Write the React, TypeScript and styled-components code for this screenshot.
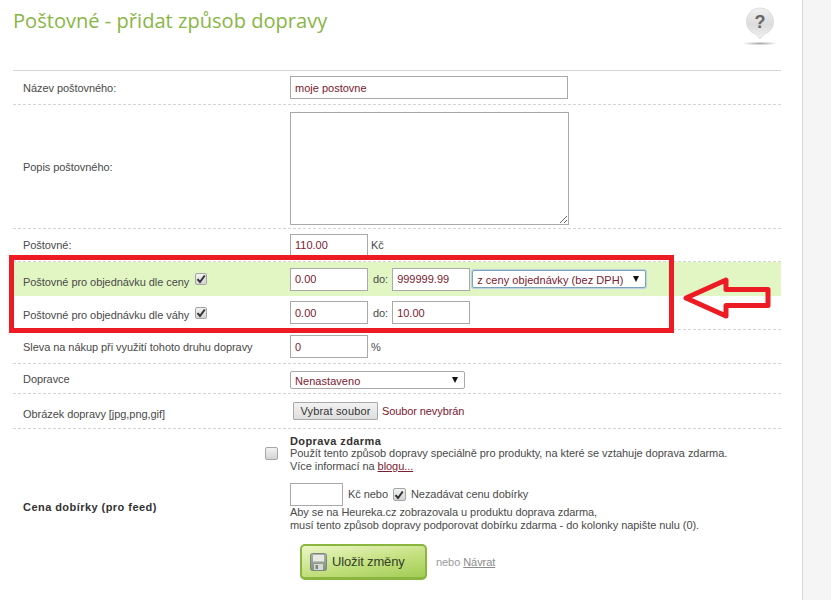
import React from "react";
import styled, { createGlobalStyle } from "styled-components";

const GlobalStyle = createGlobalStyle`
  html, body {
    margin: 0;
    padding: 0;
    background: #f5f5f5;
    height: 600px;
    overflow: hidden;
  }
`;

const Page = styled.div`
  position: relative;
  width: 803px;
  height: 600px;
  box-sizing: border-box;
  background: #fff;
  border-right: 1px solid #d8d8d8;
  padding: 0 21px 0 13px;
  font-family: "Liberation Sans", Arial, sans-serif;
  font-size: 11px;
  letter-spacing: -0.06px;
  color: #4a4a4a;
  overflow: hidden;
`;

const Header = styled.div`
  display: flex;
  justify-content: space-between;
  height: 71px;
  box-sizing: border-box;
  border-bottom: 1px solid #d6d6d6;
`;

const Title = styled.h1`
  margin: 9px 0 0;
  font-family: "Open Sans", sans-serif;
  font-weight: 400;
  font-size: 20.1px;
  line-height: 24px;
  letter-spacing: 0;
  color: #88b645;
`;

const HelpIcon = styled.svg`
  width: 38px;
  height: 40px;
  margin: 7px 2px 0 0;
`;

const Row = styled.div<{ $height: number; $green?: boolean; $last?: boolean }>`
  display: flex;
  align-items: center;
  height: ${(p) => p.$height}px;
  box-sizing: border-box;
  background: ${(p) => (p.$green ? "#e2f6c4" : "transparent")};
  border-bottom: ${(p) => (p.$last ? "none" : "1px dashed #d4d4d4")};
`;

const Label = styled.div<{ $width?: number; $bold?: boolean; $drop?: number }>`
  width: ${(p) => p.$width ?? 277}px;
  flex: none;
  box-sizing: border-box;
  padding: ${(p) => p.$drop ?? 0}px 0 0 10px;
  font-weight: ${(p) => (p.$bold ? 700 : 400)};
  letter-spacing: ${(p) => (p.$bold ? "0.45px" : "inherit")};
  color: ${(p) => (p.$bold ? "#333" : "#4a4a4a")};
  display: flex;
  align-items: center;
  gap: 6px;
`;

const Value = styled.div`
  display: flex;
  align-items: center;
`;

const Field = styled.input<{ $width: number }>`
  width: ${(p) => p.$width}px;
  height: 23px;
  box-sizing: border-box;
  border: 1px solid #a9a9a9;
  padding: 0 4px;
  margin: 0;
  background: #fff;
  font-family: "Liberation Sans", Arial, sans-serif;
  font-size: 11px;
  color: #7b2032;
  outline: none;
`;

const Area = styled.textarea`
  display: block;
  width: 279px;
  height: 113px;
  box-sizing: border-box;
  border: 1px solid #a9a9a9;
  margin: 3px 0 0;
  padding: 4px;
  outline: none;
`;

const Unit = styled.span<{ $left?: number; $right?: number }>`
  margin-left: ${(p) => p.$left ?? 3}px;
  margin-right: ${(p) => p.$right ?? 0}px;
`;

const SelectBox = styled.div<{ $width: number; $focused?: boolean }>`
  position: relative;
  width: ${(p) => p.$width}px;
  height: 18px;
  margin-top: ${(p) => (p.$focused ? 0 : 2)}px;
  box-sizing: border-box;
  border: 1px solid ${(p) => (p.$focused ? "#7da2c0" : "#a9a9a9")};
  box-shadow: ${(p) => (p.$focused ? "0 0 1px 1px #b8d0e4" : "none")};
  border-radius: 2px;
  background: #fff;
  padding-left: 4px;
  line-height: 18px;
  font-size: 11px;
  letter-spacing: 0.05px;
  color: #7b2032;
`;

const SelectArrow = styled.span`
  position: absolute;
  top: 5px;
  right: 6px;
  width: 0;
  height: 0;
  border-left: 3.5px solid transparent;
  border-right: 3.5px solid transparent;
  border-top: 6px solid #111;
`;

const Tick = styled.span<{ $size?: number }>`
  display: inline-flex;
  flex: none;
  align-items: center;
  justify-content: center;
  width: ${(p) => p.$size ?? 12}px;
  height: ${(p) => p.$size ?? 12}px;
  box-sizing: border-box;
  border: 1px solid #a5a5a5;
  border-radius: 2px;
  background: linear-gradient(#f2f2f2, #d4d4d4);
`;

const RaisedTick = styled(Tick)`
  margin-top: -5px;
`;

const FileButton = styled.button`
  height: 18px;
  width: 85px;
  margin: 0 0 0 3px;
  padding: 0;
  box-sizing: border-box;
  border: 1px solid #a8a8a8;
  border-radius: 1px;
  background: linear-gradient(#f2f2f2, #dedede);
  font-family: "Liberation Sans", Arial, sans-serif;
  font-size: 11px;
  letter-spacing: 0.15px;
  color: #333;
`;

const Wine = styled.span`
  color: #7b2032;
  margin-left: 4px;
  letter-spacing: -0.1px;
`;

const TickCell = styled.div`
  width: 27px;
  flex: none;
  align-self: flex-start;
  margin-top: 18px;
  padding-left: 2px;
  box-sizing: border-box;
`;

const FreeColumn = styled.div`
  display: flex;
  flex-direction: column;
  align-self: flex-start;
  margin-top: 6px;
  line-height: 13px;
`;

const FreeTitle = styled.div`
  font-weight: 700;
  letter-spacing: 0.4px;
  color: #333;
  margin-bottom: -1px;
`;

const BlogLink = styled.a`
  color: #7b2032;
  text-decoration: underline;
`;

const CodRow = styled.div`
  display: flex;
  align-items: center;
  margin: 10px 0 0;
  gap: 5px;
`;

const ButtonRow = styled.div`
  display: flex;
  align-items: center;
  margin: 12px 0 0 10px;
  gap: 9px;
`;

const SaveButton = styled.button`
  display: flex;
  align-items: center;
  gap: 5px;
  width: 127px;
  height: 36px;
  box-sizing: border-box;
  padding: 0 0 0 8px;
  border: 2px solid #8ab53e;
  border-bottom-width: 3px;
  border-radius: 5px;
  background: linear-gradient(170deg, #ecf6c6, #c3e07e 55%, #a2cc55);
  font-family: "Liberation Sans", Arial, sans-serif;
  font-size: 13px;
  letter-spacing: -0.15px;
  color: #33402a;
`;

const Muted = styled.span`
  color: #9a9a9a;
`;

const MutedLink = styled.a`
  color: #8c8c8c;
  text-decoration: underline;
`;

const RedFrame = styled.div`
  position: absolute;
  left: 9px;
  top: 255px;
  width: 665px;
  height: 78px;
  box-sizing: border-box;
  border: 5px solid #ed1c24;
  pointer-events: none;
`;

const Arrow = styled.svg`
  position: absolute;
  left: 680px;
  top: 275px;
  width: 94px;
  height: 46px;
`;

const Check = () => (
  <svg width="10" height="10" viewBox="0 0 10 10">
    <path d="M1.5 5.2 L4 8 L8.8 1.5" fill="none" stroke="#333" strokeWidth="2" />
  </svg>
);

const Floppy = () => (
  <svg width="17" height="18" viewBox="0 0 17 18">
    <defs>
      <linearGradient id="floppyBody" x1="0" y1="0" x2="0" y2="1">
        <stop offset="0" stopColor="#a9b2a6" />
        <stop offset="1" stopColor="#858f84" />
      </linearGradient>
    </defs>
    <rect x="0.5" y="0.5" width="16" height="17" rx="2" fill="url(#floppyBody)" stroke="#7d867e" />
    <rect x="3" y="2" width="11" height="6.5" fill="#e6eae2" />
    <rect x="4" y="11" width="9" height="6" fill="#d6dbd2" />
    <rect x="5.5" y="12" width="2.5" height="4" fill="#7b857a" />
  </svg>
);

export default function App() {
  return (
    <>
      <GlobalStyle />
      <Page>
        <Header>
          <Title>Poštovné - přidat způsob dopravy</Title>
          <HelpIcon viewBox="0 0 38 40">
            <defs>
              <linearGradient id="helpFill" x1="0" y1="0" x2="0" y2="1">
                <stop offset="0" stopColor="#f0f0f0" />
                <stop offset="0.55" stopColor="#dcdcdc" />
                <stop offset="1" stopColor="#f2f2f2" />
              </linearGradient>
              <radialGradient id="helpShadow">
                <stop offset="0" stopColor="#a8a8a8" />
                <stop offset="1" stopColor="#ffffff" />
              </radialGradient>
            </defs>
            <path
              d="M19 1 C11.5 1 5.5 7 5.5 14.5 C5.5 21 10 26 15.5 27.5 L19 32 L22.5 27.5 C28 26 32.5 21 32.5 14.5 C32.5 7 26.5 1 19 1 Z"
              fill="url(#helpFill)"
              stroke="#d2d2d2"
              strokeWidth="0.7"
            />
            <text x="19" y="21" textAnchor="middle" fontFamily="Liberation Sans" fontWeight="700" fontSize="18" fill="#666">
              ?
            </text>
            <ellipse cx="19" cy="36.5" rx="18" ry="1.8" fill="url(#helpShadow)" />
          </HelpIcon>
        </Header>

        <Row $height={34}>
          <Label>Název poštovného:</Label>
          <Value>
            <Field $width={278} defaultValue="moje postovne" />
          </Value>
        </Row>
        <Row $height={124}>
          <Label>Popis poštovného:</Label>
          <Value>
            <Area />
          </Value>
        </Row>
        <Row $height={33}>
          <Label>Poštovné:</Label>
          <Value>
            <Field $width={78} defaultValue="110.00" />
            <Unit>Kč</Unit>
          </Value>
        </Row>
        <Row $height={34} $green $last>
          <Label $drop={5}>
            Poštovné pro objednávku dle ceny
            <RaisedTick>
              <Check />
            </RaisedTick>
          </Label>
          <Value>
            <Field $width={78} defaultValue="0.00" />
            <Unit $left={5} $right={4}>do:</Unit>
            <Field $width={78} defaultValue="999999.99" />
            <Unit $left={2} />
            <SelectBox $width={174} $focused>
              z ceny objednávky (bez DPH)
              <SelectArrow />
            </SelectBox>
          </Value>
        </Row>
        <Row $height={34}>
          <Label $drop={5}>
            Poštovné pro objednávku dle váhy
            <RaisedTick>
              <Check />
            </RaisedTick>
          </Label>
          <Value>
            <Field $width={78} defaultValue="0.00" />
            <Unit $left={5} $right={4}>do:</Unit>
            <Field $width={78} defaultValue="10.00" />
          </Value>
        </Row>
        <Row $height={34}>
          <Label>Sleva na nákup při využití tohoto druhu dopravy</Label>
          <Value>
            <Field $width={78} defaultValue="0" />
            <Unit>%</Unit>
          </Value>
        </Row>
        <Row $height={30}>
          <Label>Dopravce</Label>
          <Value>
            <SelectBox $width={175}>
              Nenastaveno
              <SelectArrow />
            </SelectBox>
          </Value>
        </Row>
        <Row $height={35}>
          <Label $drop={6}>Obrázek dopravy [jpg,png,gif]</Label>
          <Value>
            <FileButton type="button">Vybrat soubor</FileButton>
            <Wine>Soubor nevybrán</Wine>
          </Value>
        </Row>
        <Row $height={156} $last>
          <Label $width={250} $bold>
            Cena dobírky (pro feed)
          </Label>
          <TickCell>
            <Tick $size={13} />
          </TickCell>
          <FreeColumn>
            <FreeTitle>Doprava zdarma</FreeTitle>
            <div>Použít tento způsob dopravy speciálně pro produkty, na které se vztahuje doprava zdarma.</div>
            <div>
              Více informací na <BlogLink>blogu...</BlogLink>
            </div>
            <CodRow>
              <Field $width={53} />
              <span>Kč nebo</span>
              <Tick $size={13}>
                <Check />
              </Tick>
              <span>Nezadávat cenu dobírky</span>
            </CodRow>
            <div>Aby se na Heureka.cz zobrazovala u produktu doprava zdarma,</div>
            <div>musí tento způsob dopravy podporovat dobírku zdarma - do kolonky napište nulu (0).</div>
            <ButtonRow>
              <SaveButton type="button">
                <Floppy />
                Uložit změny
              </SaveButton>
              <Muted>
                nebo <MutedLink>Návrat</MutedLink>
              </Muted>
            </ButtonRow>
          </FreeColumn>
        </Row>

        <RedFrame />
        <Arrow viewBox="0 0 94 46">
          <path
            d="M6 23 L46 5 L46 14.5 L88 14.5 L88 30.5 L46 30.5 L46 41 Z"
            fill="none"
            stroke="#ed1c24"
            strokeWidth="5"
            strokeLinejoin="round"
          />
        </Arrow>
      </Page>
    </>
  );
}
